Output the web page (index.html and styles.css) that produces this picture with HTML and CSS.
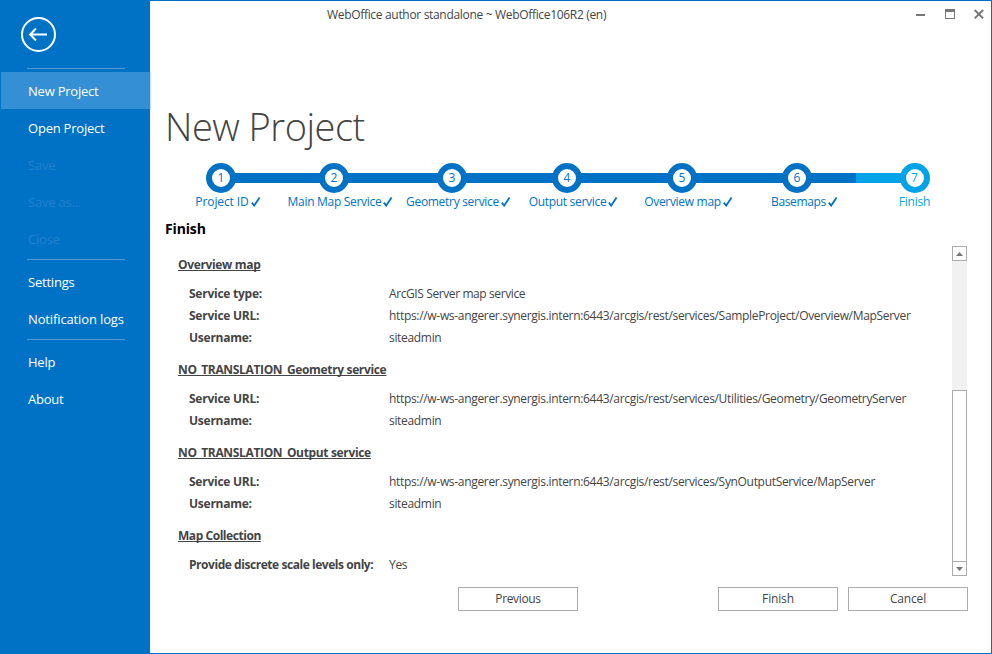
FILE: index.html
```
<!DOCTYPE html>
<html lang="en">
<head>
    <meta charset="UTF-8">
    <meta name="viewport" content="width=device-width, initial-scale=1.0">
    <title>WebOffice author standalone</title>
    <link rel="stylesheet" href="styles.css">
</head>
<body>
    <div class="window">
        <nav class="sidebar">
            <a class="back">
                <svg width="36" height="36" viewBox="0 0 36 36" fill="none" stroke="#fff">
                    <circle cx="18.5" cy="18.5" r="16.5" stroke-width="2"/>
                    <path d="M27 18.5H10.5M16 12.5L10.1 18.5l5.9 6" stroke-width="2"/>
                </svg>
            </a>
            <hr>
            <a class="item active">New Project</a>
            <a class="item open">Open Project</a>
            <a class="item disabled">Save</a>
            <a class="item disabled">Save as...</a>
            <a class="item disabled">Close</a>
            <hr class="mid">
            <a class="item">Settings</a>
            <a class="item logs">Notification logs</a>
            <hr class="mid">
            <a class="item">Help</a>
            <a class="item">About</a>
        </nav>

        <main class="main">
            <header class="titlebar">
                <span class="caption">WebOffice author standalone ~ WebOffice106R2 (en)</span>
                <svg class="controls" width="70" height="12" viewBox="0 0 70 12" fill="#777">
                    <path d="M1 5h9v2H1z"/>
                    <path d="M30 0h10v10H30zM31 3v6h8V3z" fill-rule="evenodd"/>
                    <path d="M59.7 1l8.4 8.4M68.1 1l-8.4 8.4" stroke="#777" stroke-width="2"/>
                </svg>
            </header>

            <h1>New Project</h1>

            <div class="steps">
                <div class="step s1"><span class="dot">1</span><span class="label">Project ID<svg class="check" viewBox="0 0 10 10"><path d="M.8 5.6l2.4 3L8.6 .6"/></svg></span></div>
                <div class="step s2"><span class="dot">2</span><span class="label">Main Map Service<svg class="check" viewBox="0 0 10 10"><path d="M.8 5.6l2.4 3L8.6 .6"/></svg></span></div>
                <div class="step s3"><span class="dot">3</span><span class="label">Geometry service<svg class="check" viewBox="0 0 10 10"><path d="M.8 5.6l2.4 3L8.6 .6"/></svg></span></div>
                <div class="step s4"><span class="dot">4</span><span class="label">Output service<svg class="check" viewBox="0 0 10 10"><path d="M.8 5.6l2.4 3L8.6 .6"/></svg></span></div>
                <div class="step s5"><span class="dot">5</span><span class="label">Overview map<svg class="check" viewBox="0 0 10 10"><path d="M.8 5.6l2.4 3L8.6 .6"/></svg></span></div>
                <div class="step s6"><span class="dot">6</span><span class="label">Basemaps<svg class="check" viewBox="0 0 10 10"><path d="M.8 5.6l2.4 3L8.6 .6"/></svg></span></div>
                <div class="step s7 current"><span class="dot">7</span><span class="label">Finish</span></div>
            </div>

            <h2>Finish</h2>

            <div class="summary">
                <div class="content">
                    <section>
                        <h3>Overview map</h3>
                        <dl>
                            <dt>Service type:</dt><dd class="type">ArcGIS Server map service</dd>
                            <dt>Service URL:</dt><dd>https://w-ws-angerer.synergis.intern:6443/arcgis/rest/services/SampleProject/Overview/MapServer</dd>
                            <dt>Username:</dt><dd>siteadmin</dd>
                        </dl>
                    </section>
                    <section>
                        <h3>NO_TRANSLATION_Geometry service</h3>
                        <dl>
                            <dt>Service URL:</dt><dd>https://w-ws-angerer.synergis.intern:6443/arcgis/rest/services/Utilities/Geometry/GeometryServer</dd>
                            <dt>Username:</dt><dd>siteadmin</dd>
                        </dl>
                    </section>
                    <section>
                        <h3>NO_TRANSLATION_Output service</h3>
                        <dl>
                            <dt>Service URL:</dt><dd>https://w-ws-angerer.synergis.intern:6443/arcgis/rest/services/SynOutputService/MapServer</dd>
                            <dt>Username:</dt><dd>siteadmin</dd>
                        </dl>
                    </section>
                    <section>
                        <h3 class="narrow">Map Collection</h3>
                        <dl>
                            <dt class="narrow">Provide discrete scale levels only:</dt><dd>Yes</dd>
                        </dl>
                    </section>
                </div>
                <div class="scrollbar">
                    <span class="arrow"><svg width="7" height="4" viewBox="0 0 7 4"><path d="M0 4l3.5-4L7 4z"/></svg></span>
                    <span class="thumb"></span>
                    <span class="arrow down"><svg width="7" height="4" viewBox="0 0 7 4"><path d="M0 0l3.5 4L7 0z"/></svg></span>
                </div>
            </div>

            <footer class="buttons">
                <button class="previous">Previous</button>
                <button>Finish</button>
                <button>Cancel</button>
            </footer>
        </main>
    </div>
</body>
</html>
```
FILE: styles.css
```
* {
    box-sizing: border-box;
}
body {
    margin: 0;
    font-family: "Open Sans", "Noto Sans", sans-serif;
    font-size: 12px;
    color: #444;
}
.window {
    display: flex;
    width: 992px;
    height: 654px;
    border: 1px solid #0072c6;
    background: #fff;
    overflow: hidden;
}

/* sidebar */
.sidebar {
    width: 149px;
    flex: none;
    background: #0072c6;
    font-size: 13px;
    letter-spacing: -0.22px;
}
.back {
    display: block;
    height: 67px;
    padding: 15px 0 0 19px;
}
.sidebar hr {
    width: 98px;
    height: 1px;
    margin: 0 0 3px 26px;
    border: 0;
    background: #4d9cd7;
}
.sidebar hr.mid {
    margin-top: 2px;
}
.item {
    display: block;
    height: 37px;
    padding-left: 27px;
    line-height: 38px;
    color: #fff;
    white-space: nowrap;
}
.active {
    background: #348fd4;
    box-shadow: 1px 0 #c5def2;
}
.disabled {
    color: #2181cd;
}
.logs {
    letter-spacing: -0.13px;
}

/* main area */
.main {
    flex: 1;
    display: flex;
    flex-direction: column;
}
.titlebar {
    display: flex;
    justify-content: space-between;
    height: 94px;
    padding: 5px 6px 0 177px;
}
.caption {
    line-height: 18px;
    letter-spacing: -0.32px;
}
.controls {
    margin-top: 3px;
}
h1 {
    height: 68px;
    margin: 0;
    padding-left: 15px;
    font-size: 38px;
    font-weight: 300;
    line-height: 62px;
    letter-spacing: -0.5px;
}
.steps {
    display: flex;
    height: 54px;
    padding-left: 20px;
    color: #0072c6;
}
.step {
    display: flex;
    flex-direction: column;
    align-items: center;
    background: linear-gradient(currentColor, currentColor) 0 10px / 100% 10px no-repeat;
}
.s1 { width: 102px; background-position: 51px 10px; }
.s2 { width: 124px; }
.s3 { width: 112px; }
.s4 { width: 118px; }
.s5 { width: 112px; }
.s6 { width: 118px; }
.s7 { width: 117px; background-size: 50% 10px; }
.current {
    color: #00a2e8;
}
.dot {
    width: 30px;
    height: 30px;
    border: 6.5px solid currentColor;
    border-radius: 50%;
    background: #fff;
    line-height: 18px;
    text-align: center;
}
.label {
    position: relative;
    padding-left: 1px;
    line-height: 18px;
    letter-spacing: -0.3px;
    white-space: nowrap;
}
.s1 .label {
    padding-left: 2px;
    letter-spacing: -0.1px;
}
.s6 .label {
    padding-left: 3px;
    letter-spacing: -0.35px;
}
.s7 .label {
    padding-left: 0;
    letter-spacing: -0.2px;
}
.check {
    position: absolute;
    left: 100%;
    top: 4px;
    width: 10px;
    height: 10px;
    margin-left: 2px;
    fill: none;
    stroke: currentColor;
    stroke-width: 1.8;
}
h2 {
    height: 29px;
    margin: 0;
    padding-left: 15px;
    font-size: 14px;
    line-height: 23px;
    letter-spacing: -0.15px;
    color: #000;
}

/* summary list */
.summary {
    display: flex;
    height: 330px;
    padding-left: 28px;
}
.content {
    width: 774px;
    padding-top: 8px;
}
section {
    margin-bottom: 10px;
}
h3 {
    height: 22px;
    margin: 0 0 7px;
    font-size: 12px;
    line-height: 22px;
    letter-spacing: -0.34px;
    text-decoration: underline;
    text-decoration-skip-ink: none;
}
dl {
    display: grid;
    grid-template-columns: 200px 1fr;
    margin: 0 0 0 11px;
    line-height: 22px;
    white-space: nowrap;
}
dt {
    font-weight: bold;
    letter-spacing: -0.25px;
}
.narrow {
    letter-spacing: -0.45px;
}
dd {
    margin: 0;
    letter-spacing: -0.32px;
}
dd.type {
    letter-spacing: -0.4px;
}
.scrollbar {
    display: flex;
    flex-direction: column;
    justify-content: space-between;
    width: 15px;
    background: #f1f1f1;
}
.arrow {
    display: flex;
    align-items: center;
    justify-content: center;
    height: 15px;
    border: 1px solid #ababab;
    background: #fff;
    fill: #777;
}
.thumb {
    height: 172px;
    margin: auto 0 -1px;
    border: 1px solid #ababab;
    background: #fff;
}

/* footer buttons */
.buttons {
    display: flex;
    gap: 10px;
    padding: 11px 0 0 308px;
}
button {
    width: 120px;
    height: 24px;
    padding: 0 0 2px;
    border: 1px solid #ababab;
    background: #fff;
    font: inherit;
    letter-spacing: -0.15px;
    color: #444;
}
.previous {
    margin-right: 130px;
    letter-spacing: -0.35px;
}
```
